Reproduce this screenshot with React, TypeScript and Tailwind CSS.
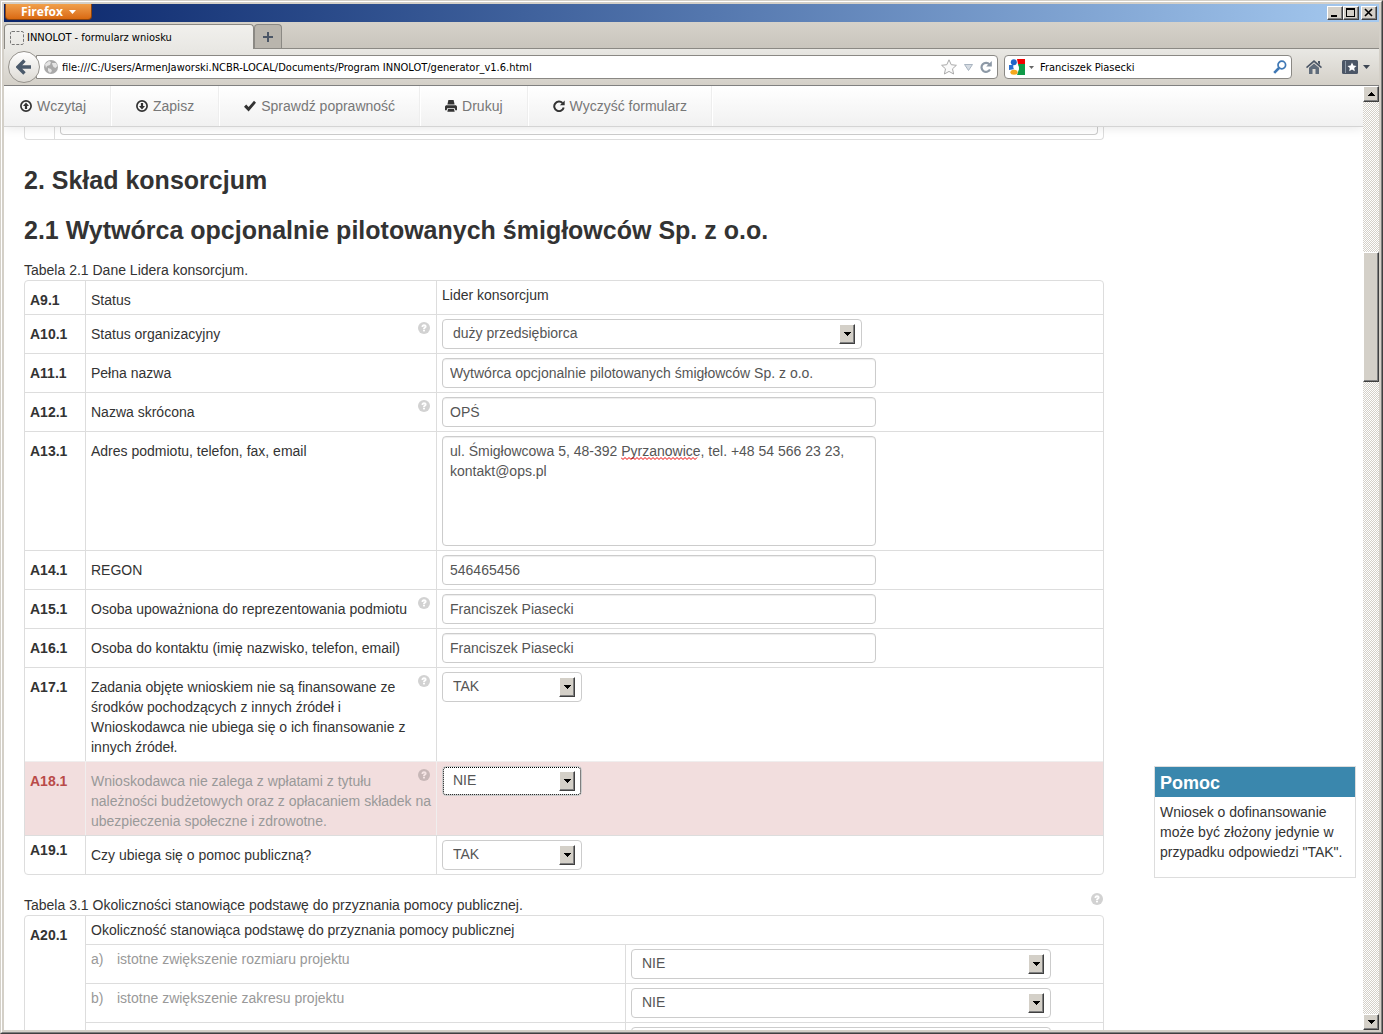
import React from 'react';

const ANSWER_OPTIONS = ['TAK', 'NIE'];

const HelpIcon: React.FC<{ className?: string }> = ({ className = '' }) => (
  <button type="button" aria-label="Pomoc" className={`float-right h-3 w-3 opacity-20 ${className}`}>
    <svg viewBox="0 0 12 12" className="block h-3 w-3">
      <circle cx="6" cy="6" r="6" fill="#222" />
      <path d="M3.500 5c0-1.800 1-2.700 2.500-2.700s2.600.8 2.600 2.100c0 1.500-1.600 1.500-1.600 2.600H5c0-1.700 1.500-1.700 1.500-2.500 0-.4-.2-.6-.5-.6-.4 0-.6.400-.6 1.100z" fill="#fff" />
      <rect x="5" y="7.700" width="2" height="1.700" fill="#fff" />
    </svg>
  </button>
);

const bevel =
  'flex items-center justify-center border border-t-white border-l-white border-r-[#404040] border-b-[#404040] bg-[#d4d0c8] shadow-[inset_-1px_-1px_0_#808080]';

const ArrowDown = () => (
  <svg viewBox="0 0 7 4" className="h-1 w-[7px]" shapeRendering="crispEdges">
    <path d="M0 0h7v1H6v1H5v1H4v1H3V3H2V2H1V1H0z" fill="#000" />
  </svg>
);

interface SelectProps {
  id: string;
  value: string;
  options?: string[];
  wide?: boolean;
  focused?: boolean;
  label?: string;
}

const Select: React.FC<SelectProps> = ({ id, value, options = ANSWER_OPTIONS, wide, focused, label }) => (
  <div className={`relative h-[30px] ${wide ? 'w-[420px]' : 'w-[140px]'}`}>
    <select
      id={id}
      defaultValue={value}
      aria-label={label}
      className={`block h-[30px] w-full appearance-none rounded border border-[#ccc] bg-white pb-0.5 pl-2.5 pr-6 text-sm leading-5 text-[#555] ${
        focused ? 'outline-1 outline-dotted -outline-offset-2 outline-black' : 'outline-none'
      }`}
    >
      {options.map((o) => (
        <option key={o}>{o}</option>
      ))}
    </select>
    <span className={`pointer-events-none absolute top-[5px] right-[7px] h-5 w-4 ${bevel}`}>
      <ArrowDown />
    </span>
  </div>
);

const inputClass =
  'block w-[434px] rounded border border-[#ccc] bg-white px-[7px] py-1 text-sm leading-5 text-[#555] outline-none shadow-[inset_0_1px_1px_rgba(0,0,0,0.075)]';

const TextInput: React.FC<{ id: string; value: string }> = ({ id, value }) => (
  <input id={id} type="text" defaultValue={value} className={`h-[30px] ${inputClass}`} />
);

const AddressField: React.FC<{ id: string }> = ({ id }) => (
  <div className="relative">
    <textarea
      id={id}
      spellCheck={false}
      defaultValue={'ul. Śmigłowcowa 5, 48-392 Pyrzanowice, tel. +48 54 566 23 23,\nkontakt@ops.pl'}
      className={`h-[110px] resize-none ${inputClass}`}
    />
    {/* spelling mark */}
    <svg className="pointer-events-none absolute top-[21px] left-[179px] h-[3px] w-[78px]" viewBox="0 0 78 3">
      <path
        d={'M0 .5' + Array.from({ length: 19 }, () => 'l2 2l2 -2').join('')}
        fill="none"
        stroke="#e00"
        strokeWidth="1"
      />
    </svg>
  </div>
);

interface Row {
  code: string;
  label: string;
  help?: boolean;
  error?: boolean;
  high?: boolean;
  field: (id: string) => React.ReactNode;
}

const rows: Row[] = [
  { code: 'A9.1', label: 'Status', field: () => 'Lider konsorcjum' },
  {
    code: 'A10.1',
    label: 'Status organizacyjny',
    help: true,
    field: (id) => <Select id={id} wide value="duży przedsiębiorca" options={['duży przedsiębiorca']} />,
  },
  {
    code: 'A11.1',
    label: 'Pełna nazwa',
    field: (id) => <TextInput id={id} value="Wytwórca opcjonalnie pilotowanych śmigłowców Sp. z o.o." />,
  },
  { code: 'A12.1', label: 'Nazwa skrócona', help: true, field: (id) => <TextInput id={id} value="OPŚ" /> },
  { code: 'A13.1', label: 'Adres podmiotu, telefon, fax, email', field: (id) => <AddressField id={id} /> },
  { code: 'A14.1', label: 'REGON', field: (id) => <TextInput id={id} value="546465456" /> },
  {
    code: 'A15.1',
    label: 'Osoba upoważniona do reprezentowania podmiotu',
    help: true,
    field: (id) => <TextInput id={id} value="Franciszek Piasecki" />,
  },
  {
    code: 'A16.1',
    label: 'Osoba do kontaktu (imię nazwisko, telefon, email)',
    field: (id) => <TextInput id={id} value="Franciszek Piasecki" />,
  },
  {
    code: 'A17.1',
    label:
      'Zadania objęte wnioskiem nie są finansowane ze środków pochodzących z innych źródeł i Wnioskodawca nie ubiega się o ich finansowanie z innych źródeł.',
    help: true,
    field: (id) => <Select id={id} value="TAK" />,
  },
  {
    code: 'A18.1',
    label:
      'Wnioskodawca nie zalega z wpłatami z tytułu należności budżetowych oraz z opłacaniem składek na ubezpieczenia społeczne i zdrowotne.',
    help: true,
    error: true,
    field: (id) => <Select id={id} value="NIE" focused />,
  },
  {
    code: 'A19.1',
    label: 'Czy ubiega się o pomoc publiczną?',
    high: true,
    field: (id) => <Select id={id} value="TAK" />,
  },
];

const aidRows = [
  { id: 'A20-a', mark: 'a)', label: 'istotne zwiększenie rozmiaru projektu' },
  { id: 'A20-b', mark: 'b)', label: 'istotne zwiększenie zakresu projektu' },
  { id: 'A20-c', mark: '', label: '' },
];

const tableClass =
  'w-full table-fixed border-separate border-spacing-0 rounded border border-[#ddd] text-left align-top';

const LeaderTable = () => (
  <table className={tableClass}>
    <colgroup>
      <col className="w-[60px]" />
      <col className="w-[351px]" />
      <col />
    </colgroup>
    <tbody>
      {rows.map((row, i) => {
        const line = `${i > 0 ? 'border-t' : ''} ${row.error ? 'border-[#f0eeee] bg-[#f2dede]' : 'border-[#ddd]'}`;
        const isText = row.code === 'A9.1';
        return (
          <tr key={row.code} className="align-top">
            <th
              scope="row"
              className={`${line} px-[5px] pb-1 font-bold ${row.high ? 'pt-1' : 'pt-[9px]'} ${
                row.error ? 'text-[#b94a48]' : ''
              }`}
            >
              {row.code}
            </th>
            <td className={`${line} border-l pt-[9px] pb-1 pl-[5px] ${row.error ? 'text-[#999]' : ''}`}>
              {row.help && <HelpIcon className="-mt-0.5 mr-1.5" />}
              {isText ? row.label : <label htmlFor={row.code}>{row.label}</label>}
            </td>
            <td className={`${line} border-l px-[5px] py-1`}>{row.field(row.code)}</td>
          </tr>
        );
      })}
    </tbody>
  </table>
);

const AidTable = () => (
  <table className={tableClass}>
    <colgroup>
      <col className="w-[60px]" />
      <col className="w-[540px]" />
      <col />
    </colgroup>
    <tbody>
      <tr className="align-top">
        <th scope="rowgroup" rowSpan={4} className="px-[5px] pt-[9px] font-bold">
          A20.1
        </th>
        <td colSpan={2} className="border-l border-[#ddd] px-[5px] py-1">
          Okoliczność stanowiąca podstawę do przyznania pomocy publicznej
        </td>
      </tr>
      {aidRows.map((row) => (
        <tr key={row.id} className="align-top">
          <td className="border-t border-l border-[#ddd] px-[5px] py-1 text-[#999]">
            <label htmlFor={row.id} className="flex">
              <span className="w-[26px]">{row.mark}</span>
              {row.label}
            </label>
          </td>
          <td className="border-t border-l border-[#ddd] px-[5px] py-1">
            <Select id={row.id} wide value="NIE" label={row.label || 'Okoliczność'} />
          </td>
        </tr>
      ))}
    </tbody>
  </table>
);

const UploadIcon = () => (
  <svg viewBox="0 0 12 12" className="h-3 w-3">
    <circle cx="6" cy="6" r="5.100" fill="none" stroke="#333" strokeWidth="1.700" />
    <path d="M6 2.600L9 6H7.100v3H4.900V6H3z" fill="#333" />
  </svg>
);

const DownloadIcon = () => (
  <svg viewBox="0 0 12 12" className="h-3 w-3">
    <circle cx="6" cy="6" r="5.100" fill="none" stroke="#333" strokeWidth="1.700" />
    <path d="M6 9.400L9 6H7.100V3H4.900v3H3z" fill="#333" />
  </svg>
);

const CheckIcon = () => (
  <svg viewBox="0 0 12 12" className="h-3 w-3">
    <path d="M0 6.800l2.200-2.200 2.400 2.300L10 .8l2 2-7.400 8.600z" fill="#333" />
  </svg>
);

const PrintIcon = () => (
  <svg viewBox="0 0 12 12" className="h-3 w-3">
    <path d="M3.400 0h5.200l1 4.500H2.400z" fill="#333" />
    <path d="M1 5.200h10l1 1.300v3.700h-1.700L9.800 8.200H2.200l-.5 2H0V6.500z" fill="#333" />
    <path d="M3 9h6l.7 2.800H2.300z" fill="#333" />
  </svg>
);

const RefreshIcon = () => (
  <svg viewBox="0 0 12 12" className="h-3 w-3">
    <path d="M9.500 3A4.800 4.800 0 1 0 10.700 7.500" fill="none" stroke="#333" strokeWidth="2" />
    <path d="M11.700.4v4.800H6.900z" fill="#333" />
  </svg>
);

const actions = [
  { label: 'Wczytaj', icon: <UploadIcon /> },
  { label: 'Zapisz', icon: <DownloadIcon /> },
  { label: 'Sprawdź poprawność', icon: <CheckIcon /> },
  { label: 'Drukuj', icon: <PrintIcon /> },
  { label: 'Wyczyść formularz', icon: <RefreshIcon /> },
];

const Toolbar = () => (
  <nav className="relative z-10 flex h-[41px] shrink-0 border-b border-[#d4d4d4] bg-linear-to-b from-white to-[#f1f1f1] shadow-[0_1px_10px_rgba(0,0,0,0.1)]">
    {actions.map((a, i) => (
      <button
        key={a.label}
        type="button"
        className={`flex items-center gap-[5px] border-r border-[#eee] pr-6 text-sm text-[#777] shadow-[1px_0_0_#fff] ${
          i === 0 ? 'pl-4' : 'pl-[25px]'
        }`}
      >
        {a.icon}
        {a.label}
      </button>
    ))}
  </nav>
);

const TitleBar = () => (
  <div className="flex h-[18px] shrink-0 items-start justify-between bg-linear-to-r from-[#0a246a] to-[#a6caf0] px-px">
    <button
      type="button"
      className="flex h-4 w-[87px] items-center justify-center gap-1.5 rounded-b border border-t-0 border-[#8a4310] bg-linear-to-b from-[#f0a04a] to-[#d9690e] font-['Open_Sans',sans-serif] text-xs font-bold text-white"
    >
      Firefox
      <svg viewBox="0 0 7 4" className="h-1 w-[7px]">
        <path d="M0 0h7L3.500 4z" fill="#fff" />
      </svg>
    </button>
    <div className="flex pt-0.5 pr-px">
      <button type="button" aria-label="Minimalizuj" className={`h-3.5 w-4 ${bevel}`}>
        <svg viewBox="0 0 12 10" className="h-2.5 w-3" shapeRendering="crispEdges">
          <path d="M2 7h6v2H2z" />
        </svg>
      </button>
      <button type="button" aria-label="Maksymalizuj" className={`h-3.5 w-4 ${bevel}`}>
        <svg viewBox="0 0 12 10" className="h-2.5 w-3" shapeRendering="crispEdges">
          <path d="M1 0h9v9H1zM2 2v6h7V2z" fillRule="evenodd" />
        </svg>
      </button>
      <button type="button" aria-label="Zamknij" className={`ml-0.5 h-3.5 w-4 ${bevel}`}>
        <svg viewBox="0 0 12 10" className="h-2.5 w-3">
          <path d="M2 1l7 7M9 1L2 8" stroke="#000" strokeWidth="1.600" />
        </svg>
      </button>
    </div>
  </div>
);

const chromeFont = "pt-0.5 font-['DejaVu_Sans_Condensed','DejaVu_Sans',sans-serif] text-[11px] text-black";

const TabStrip = () => (
  <div className="flex h-[27px] shrink-0 items-end border-b border-[#8b8984] bg-linear-to-b from-[#d6d2ca] to-[#c9c5bd]">
    <button
      type="button"
      className={`-mb-px flex h-[25px] w-[250px] items-center gap-[3px] rounded-t border border-b-0 border-[#8b8984] bg-linear-to-b from-[#f1f0ed] to-[#e9e8e4] pl-[5px] ${chromeFont}`}
    >
      <svg viewBox="0 0 14 14" className="h-3.5 w-3.5">
        <rect x=".5" y=".5" width="13" height="13" rx="1.500" fill="none" stroke="#777" strokeDasharray="3 1.500" />
      </svg>
      INNOLOT - formularz wniosku
    </button>
    <button
      type="button"
      aria-label="Nowa karta"
      className="flex h-6 w-7 items-center justify-center rounded-t border border-b-0 border-[#8b8984] bg-[#b9b5ad]"
    >
      <svg viewBox="0 0 10 10" className="h-2.5 w-2.5">
        <path d="M4 0h2v4h4v2H6v4H4V6H0V4h4z" fill="#4b5666" />
      </svg>
    </button>
  </div>
);

const AddressBar = () => (
  <div className="flex h-[37px] shrink-0 items-center border-b border-[#808080] bg-linear-to-b from-[#e9e8e4] to-[#d4d0c8] pr-[9px] pl-1">
    <button
      type="button"
      aria-label="Wstecz"
      className="relative z-10 flex h-8 w-8 shrink-0 items-center justify-center rounded-full border border-[#96938d] bg-linear-to-b from-white to-[#dddad4]"
    >
      <svg viewBox="0 0 16 16" className="h-4 w-4">
        <path d="M8.500 1.500L2 8l6.500 6.500M2.500 8H15" fill="none" stroke="#4b5a6b" strokeWidth="3.400" />
      </svg>
    </button>
    <div className="-ml-1 flex h-6 flex-1 items-center rounded-r-sm border border-[#8a8884] bg-white pr-[5px] pl-[7px]">
      <svg viewBox="0 0 14 14" className="h-3.5 w-3.5">
        <circle cx="7" cy="7" r="7" fill="#a9a9a9" />
        <path d="M1 4l4-3 2 1-1 3-3 1-1 2zM8 3l4 0 1.500 3-2 2-2-1-1-2zM4 8l3 1 1 2-2 2-2-2z" fill="#e4e4e4" />
      </svg>
      <input
        type="text"
        aria-label="Adres"
        defaultValue="file:///C:/Users/ArmenJaworski.NCBR-LOCAL/Documents/Program INNOLOT/generator_v1.6.html"
        className={`ml-1 h-5 min-w-0 flex-1 outline-none ${chromeFont}`}
      />
      <button type="button" aria-label="Dodaj zakładkę">
        <svg viewBox="0 0 16 16" className="h-4 w-4">
          <path d="M8 .8l2.200 4.900 5.200.6-3.900 3.500 1.100 5.200L8 12.400 3.400 15l1.100-5.200L.6 6.300l5.200-.6z" fill="#fbfbfb" stroke="#aaa" />
        </svg>
      </button>
      <button type="button" aria-label="Historia" className="ml-[7px]">
        <svg viewBox="0 0 9 7" className="h-[7px] w-[9px]">
          <path d="M.5.500h8L4.500 6.500z" fill="#d5dbe2" stroke="#a9b4c0" />
        </svg>
      </button>
      <button type="button" aria-label="Odśwież" className="ml-[7px]">
        <svg viewBox="0 0 12 12" className="h-3 w-3">
          <path d="M9.500 3.500A4.500 4.500 0 1 0 10 8.500" fill="none" stroke="#8d99a6" strokeWidth="2.200" />
          <path d="M11.800 0v5.600H6.200z" fill="#8d99a6" />
        </svg>
      </button>
    </div>
    <div className="ml-1.5 flex h-6 w-72 items-center rounded-sm border border-[#8a8884] bg-white px-1">
      <svg viewBox="0 0 16 16" className="h-4 w-4">
        <path d="M8 0h8v5H9z" fill="#f00000" />
        <path d="M9 5h7v11H8l2-6z" fill="#0f9a48" />
        <path d="M0 6h4l2 4-6 1z" fill="#2a6fd0" />
        <circle cx="4.800" cy="3.300" r="3" fill="#1f64c8" />
        <path d="M4 7.500l4-1.500c2 1 2.500 3.500 1 5.500L5 10.500z" fill="#fff" />
        <ellipse cx="5" cy="13.300" rx="3.600" ry="2.500" fill="#f5a81c" />
      </svg>
      <svg viewBox="0 0 5 3" className="ml-1 h-[3px] w-[5px]">
        <path d="M0 0h5L2.500 3z" fill="#666" />
      </svg>
      <input
        type="text"
        aria-label="Szukaj"
        defaultValue="Franciszek Piasecki"
        className={`ml-1.5 h-5 min-w-0 flex-1 outline-none ${chromeFont}`}
      />
      <button type="button" aria-label="Szukaj w Google">
        <svg viewBox="0 0 14 14" className="h-3.5 w-3.5">
          <circle cx="8.800" cy="5" r="3.800" fill="none" stroke="#3f78b5" strokeWidth="1.700" />
          <path d="M6 8L1.200 12.800" stroke="#3f78b5" strokeWidth="2.600" />
        </svg>
      </button>
    </div>
    <button type="button" aria-label="Strona startowa" className="ml-3.5">
      <svg viewBox="0 0 16 14" className="h-3.5 w-4">
        <path d="M8 0l8 7-1 1.200L8 2.300 1 8.200 0 7z" fill="#4b5666" />
        <path d="M8 3.500l5 4.200V14H9.500V9h-3v5H3V7.700z" fill="#5f6b7a" />
        <path d="M12 1h2v4l-2-2z" fill="#4b5666" />
      </svg>
    </button>
    <button type="button" aria-label="Zakładki" className="ml-5 flex items-center gap-[5px]">
      <svg viewBox="0 0 16 14" className="h-3.5 w-4">
        <rect width="16" height="14" rx="1.500" fill="#4b5666" />
        <path d="M3.500 1v12" stroke="#8d99a6" />
        <path d="M10 2.500l1.400 3 3.100.4-2.300 2.100.6 3.200L10 9.600l-2.800 1.600.6-3.200-2.300-2.100 3.100-.4z" fill="#fff" />
      </svg>
      <svg viewBox="0 0 7 4" className="h-1 w-[7px]">
        <path d="M0 0h7L3.500 4z" fill="#3d4652" />
      </svg>
    </button>
  </div>
);

const Scrollbar = () => (
  <div className="flex w-4 shrink-0 flex-col bg-[repeating-conic-gradient(#fff_0_25%,#d4d0c8_0_50%)] bg-[length:2px_2px]">
    <button type="button" aria-label="W górę" className={`h-4 shrink-0 ${bevel}`}>
      <span className="rotate-180">
        <ArrowDown />
      </span>
    </button>
    <div className={`mt-[150px] h-[130px] shrink-0 ${bevel}`} />
    <button type="button" aria-label="W dół" className={`mt-auto h-4 shrink-0 ${bevel}`}>
      <ArrowDown />
    </button>
  </div>
);

const HelpPanel = () => (
  <aside className="mt-[639px] w-[202px] shrink-0 self-start border border-[#ddd] bg-white">
    <h4 className="bg-[#3a87ad] px-[5px] pt-1.5 pb-1 text-lg leading-5 font-bold text-white">Pomoc</h4>
    <p className="px-[5px] pt-[5px] pb-[15px]">
      Wniosek o dofinansowanie może być złożony jedynie w przypadku odpowiedzi "TAK".
    </p>
  </aside>
);

const App: React.FC = () => {
  return (
    <div className="h-screen overflow-hidden border border-t-[#d4d0c8] border-r-[#404040] border-b-[#404040] border-l-[#d4d0c8] font-['Liberation_Sans',Arial,sans-serif] text-sm leading-5 text-[#333]">
      <div className="flex h-full flex-col border border-t-white border-r-[#808080] border-b-[#808080] border-l-white bg-[#d4d0c8] p-0.5">
        <TitleBar />
        <TabStrip />
        <AddressBar />
        <div className="flex min-h-0 flex-1">
          <div className="flex min-w-0 flex-1 flex-col overflow-hidden bg-white">
            <Toolbar />
            <div className="flex min-h-0 flex-1 gap-[50px] overflow-hidden pr-[7px] pl-5">
              <main className="min-w-0 flex-1">
                {/* end of the previous section, scrolled under the toolbar */}
                <div className="flex h-[13px] rounded-b border border-t-0 border-[#ddd]">
                  <div className="w-[29px]" />
                  <div className="flex-1 border-l border-[#ddd] px-[5px]">
                    <div className="h-2 rounded-b border border-t-0 border-[#ccc]" />
                  </div>
                </div>
                <h2 className="mt-5 text-[25px] leading-10 font-bold">2. Skład konsorcjum</h2>
                <h3 className="mt-2.5 text-[25px] leading-10 font-bold">
                  2.1 Wytwórca opcjonalnie pilotowanych śmigłowców Sp. z o.o.
                </h3>
                <p className="mt-2.5">Tabela 2.1 Dane Lidera konsorcjum.</p>
                <LeaderTable />
                <p className="mt-5">
                  <HelpIcon className="-mt-0.5 mr-px" />
                  Tabela 3.1 Okoliczności stanowiące podstawę do przyznania pomocy publicznej.
                </p>
                <AidTable />
              </main>
              <HelpPanel />
            </div>
          </div>
          <Scrollbar />
        </div>
      </div>
    </div>
  );
};

export default App;
